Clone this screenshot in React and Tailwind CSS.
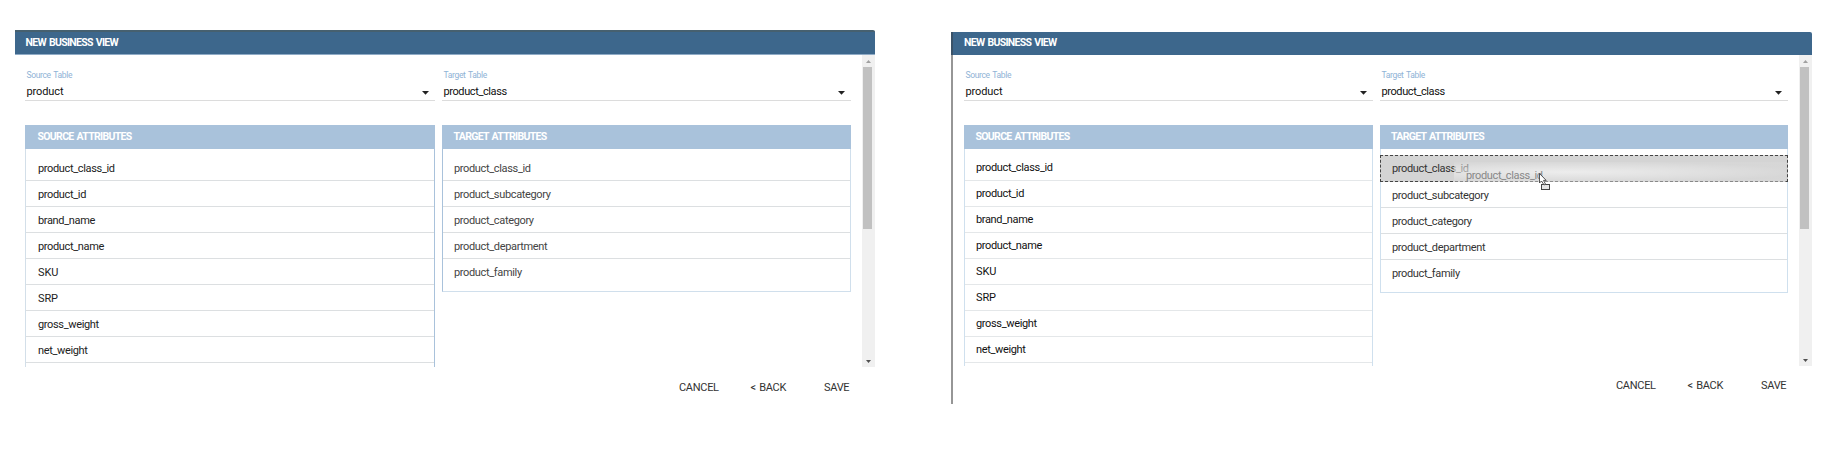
const source = ['product_class_id', 'product_id', 'brand_name', 'product_name', 'SKU', 'SRP', 'gross_weight', 'net_weight', ''];
const target = ['product_class_id', 'product_subcategory', 'product_category', 'product_department', 'product_family'];

function Select({ label, value, caret, className }) {
  return (
    <div className={`relative flex h-[31px] shrink-0 flex-col border-b border-[#dcdcdc] pl-[1.5px] ${className}`}>
      <span className="h-[11px] w-fit text-[8.5px] leading-[11px] tracking-[-0.35px] text-[#8fb3d6] [word-spacing:1px]">{label}</span>
      <div className={`flex h-[19px] items-center justify-between ${caret}`}>
        <span className={`mt-[3px] text-[11px] leading-[14px] text-[#111] ${value === 'product' ? 'tracking-[-0.1px]' : 'tracking-[-0.4px]'}`}>{value}</span>
        <svg className="mt-[5px]" width="7" height="4" viewBox="0 0 7 4"><path d="M0 0h7L3.5 3.8z" fill="#222" /></svg>
      </div>
    </div>
  );
}

function Heading({ children, pad }) {
  return (
    <div className={`flex h-6 items-center bg-[#a9c2db] ${pad}`}>
      <span className="mt-[-1px] text-[10.5px] font-bold leading-[14px] tracking-[-0.68px] text-white [word-spacing:1px]">{children}</span>
    </div>
  );
}

function Row({ children, line, text }) {
  return (
    <div className={`flex h-[26px] shrink-0 items-center border-b pl-3 ${line}`}>
      <span className={`text-[11px] leading-[14px] ${children.length > 3 ? 'tracking-[-0.35px]' : 'tracking-[-0.1px]'} ${text}`}>{children}</span>
    </div>
  );
}

function Scrollbar() {
  return (
    <div className="relative flex h-full w-[13px] shrink-0 flex-col items-center bg-[#f0f0f0]">
      <svg className="mt-[5px] shrink-0" width="5" height="3" viewBox="0 0 5 3"><path d="M0 3h5L2.5 0z" fill="#a0a0a0" /></svg>
      <div className="mt-1 mr-[2px] h-[162px] w-[9px] shrink-0 bg-[#c1c1c1]" />
      <svg className="mt-auto mb-1 shrink-0" width="5" height="3" viewBox="0 0 5 3"><path d="M0 0h5L2.5 3z" fill="#505050" /></svg>
    </div>
  );
}

function Footer({ className }) {
  return (
    <div className={`flex text-[11px] leading-[14px] tracking-[-0.3px] text-[#333] ${className}`}>
      <span className="w-[71.5px]">CANCEL</span>
      <span className="w-[73.5px] [word-spacing:1px]">&lt; BACK</span>
      <span>SAVE</span>
    </div>
  );
}

function Cursor() {
  return (
    <svg className="absolute left-[157px] top-[24px]" width="14" height="18" viewBox="0 0 14 18">
      <rect x="3.5" y="11.5" width="8" height="5" fill="#e6e6e6" stroke="#444" />
      <path d="M1.500 0.500v9.500l2-2 2.600 4 1.400-.8-2-3.800h2.700z" fill="#fff" stroke="#444" strokeWidth="0.900" />
    </svg>
  );
}

export default function App() {
  return (
    <div className="flex h-[457px] w-[1831px] bg-white font-['Roboto',sans-serif]">
      <section className="ml-[15px] mt-[30px] flex h-[375px] w-[860px] flex-col">
        <header className="flex h-[25px] shrink-0 items-center rounded-tr-[2px] border-t-2 border-b border-t-[#46606f] border-b-[#8fabc6] bg-[#3d678c] pl-[10.500px]">
          <h1 className="mt-[-1px] text-[10.500px] font-bold leading-[14px] tracking-[-0.680px] text-white [word-spacing:1px]">NEW BUSINESS VIEW</h1>
        </header>
        <main className="flex h-[312px] overflow-hidden">
          <div className="flex grow pl-[10px]">
            <div className="flex w-[410px] flex-col">
              <Select label="Source Table" value="product" caret="pr-[6px]" className="mt-[15px]" />
              <div className="mt-6"><Heading pad="pl-[12.500px]">SOURCE ATTRIBUTES</Heading></div>
              <div className="flex h-[218px] flex-col overflow-hidden border-l border-r border-l-[#d3dfe9] border-r-[#a9c2db] pt-[6px]">
                {source.map((s) => <Row key={s} line="border-[#dcdfe1]" text="mt-[2px] text-[#222]">{s}</Row>)}
              </div>
            </div>
            <div className="ml-[7px] flex w-[409px] flex-col">
              <Select label="Target Table" value="product_class" caret="pr-[6px]" className="mt-[15px]" />
              <div className="mt-6"><Heading pad="pl-[11.500px]">TARGET ATTRIBUTES</Heading></div>
              <div className="flex h-[143px] flex-col border-b border-l border-r border-b-[#d0dfec] border-l-[#a9c2db] border-r-[#d0dfec] pt-[6px]">
                {target.map((s, i) => <Row key={s} line={i === 4 ? 'border-transparent' : 'border-[#dcdfe1]'} text="mt-[2px] -ml-px text-[#444]">{s}</Row>)}
              </div>
            </div>
          </div>
          <Scrollbar />
        </main>
        <Footer className="ml-[664px] mt-[14px]" />
      </section>

      <section className="ml-[76px] mt-8 flex h-[372px] w-[861px] flex-col border-l-2 border-[#969696]">
        <header className="-ml-[2px] flex h-[23px] shrink-0 items-center rounded-tr-[2px] border-l-2 border-[#3a5268] bg-[#3d678c] pl-[11px]">
          <h1 className="mt-[-2px] text-[10.500px] font-bold leading-[14px] tracking-[-0.680px] text-white [word-spacing:1px]">NEW BUSINESS VIEW</h1>
        </header>
        <main className="flex h-[311px]">
          <div className="flex grow pl-[11px]">
            <div className="flex w-[409px] flex-col">
              <Select label="Source Table" value="product" caret="pr-[6px]" className="mt-[15px]" />
              <div className="mt-6"><Heading pad="pl-[11.500px]">SOURCE ATTRIBUTES</Heading></div>
              <div className="flex h-[217px] flex-col overflow-hidden border-l border-r border-[#cfe0ee] pt-[6px]">
                {source.map((s) => <Row key={s} line="border-[#e4e7e9]" text="mt-px -ml-px text-[#111]">{s}</Row>)}
              </div>
            </div>
            <div className="ml-[7px] flex w-[408px] flex-col">
              <Select label="Target Table" value="product_class" caret="pr-[6px]" className="mt-[15px]" />
              <div className="mt-6"><Heading pad="pl-[11px]">TARGET ATTRIBUTES</Heading></div>
              <div className="relative flex h-[144px] flex-col border-b border-l border-r border-[#cfe0ee] pt-[6px]">
                <div className="-mx-px flex h-[27px] shrink-0 items-center border border-dashed border-[#444] bg-[#d4d4d4] pl-[11px]">
                  <span className="text-[11px] leading-[14px] tracking-[-0.350px] text-[#333]">product_class_id</span>
                </div>
                {target.slice(1).map((s, i) => <Row key={s} line={i === 3 ? 'border-transparent' : 'border-[#dcdfe1]'} text="mt-[2px] -ml-px text-[#333]">{s}</Row>)}
                <div className="absolute left-[73px] top-[13px] h-[20px] w-[332px] bg-[radial-gradient(ellipse_at_34%_50%,rgba(245,245,245,0.75),rgba(218,218,218,0.45)_75%)] pl-3">
                  <span className="block pt-[7px] text-[11px] leading-[14px] tracking-[-0.350px] text-[#888]">product_class_id</span>
                </div>
                <Cursor />
              </div>
            </div>
          </div>
          <Scrollbar />
        </main>
        <Footer className="ml-[663px] mt-[13px]" />
      </section>
    </div>
  );
}
